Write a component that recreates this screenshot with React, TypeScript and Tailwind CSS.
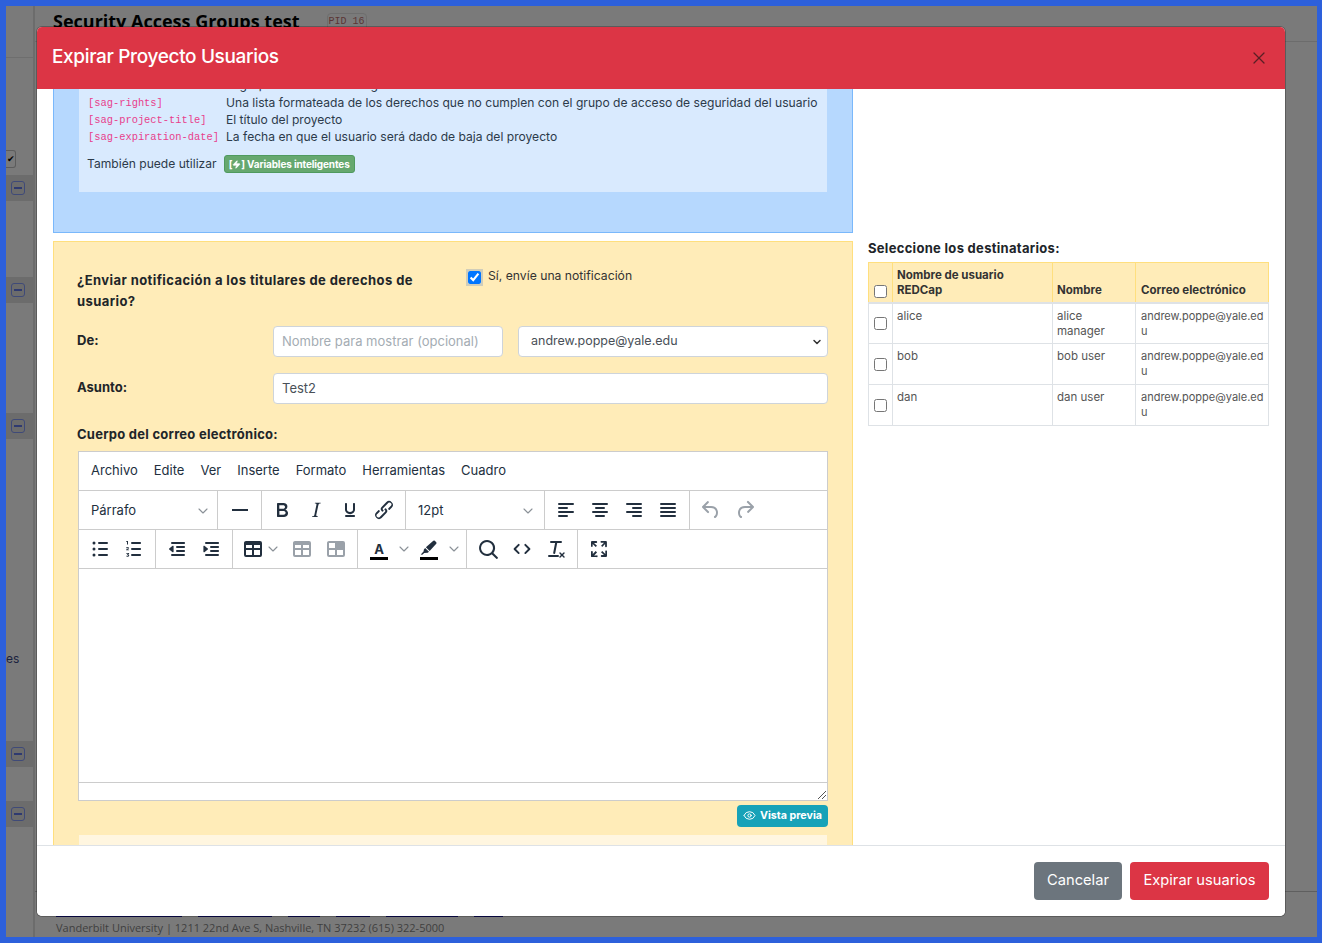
import { X, Eye, ChevronDown, Zap } from "lucide-react";

const FONT = "[font-family:Inter,'Noto_Sans',sans-serif]";

function Mce({ d, muted }: { d: string; muted?: boolean }) {
  return (
    <svg viewBox="0 0 24 24" className={muted ? "h-6 w-6 fill-[#9aa1a9]" : "h-6 w-6 fill-[#222f3e]"}>
      <path d={d} />
    </svg>
  );
}

const Bold = "M7.8 19c-.3 0-.5 0-.6-.2l-.2-.5V5.7c0-.2 0-.4.2-.5l.6-.2h5c1.5 0 2.7.3 3.5 1 .7.6 1.1 1.4 1.1 2.5a3 3 0 0 1-.6 1.9c-.4.6-1 1-1.6 1.2.4.1.9.3 1.3.6s.8.7 1 1.2c.4.4.5 1 .5 1.6 0 1.3-.4 2.3-1.3 3-.8.7-2.1 1-3.8 1H7.8zm5-8.3c.6 0 1.2-.1 1.6-.5.4-.3.6-.7.6-1.3 0-1.1-.8-1.7-2.3-1.7H9.3v3.5h3.4zm.5 6c.7 0 1.3-.1 1.7-.4.4-.4.6-.9.6-1.5s-.2-1-.7-1.4c-.4-.3-1-.4-2-.4H9.4v3.8h4z";
const Italic = "M16.7 4.7l-.1.9h-.3c-.6 0-1 0-1.4.3-.3.3-.4.6-.5 1.1l-2.1 9.8v.6c0 .5.4.8 1.4.8h.2l-.2.8H8l.2-.8h.2c1.1 0 1.8-.5 2-1.5l2-9.8.1-.5c0-.6-.4-.8-1.4-.8h-.3l.2-.9h5.8z";
const Underline = "M16 5c.6 0 1 .4 1 1v5.5a4 4 0 0 1-.4 1.8l-1 1.4a5.3 5.3 0 0 1-5.5 1 5 5 0 0 1-1.6-1c-.5-.4-.8-.9-1.1-1.4a4 4 0 0 1-.4-1.8V6c0-.6.4-1 1-1s1 .4 1 1v5.5c0 .3 0 .6.2 1l.6.7a3.3 3.3 0 0 0 2.2.8 3.4 3.4 0 0 0 2.2-.8c.3-.2.4-.5.6-.8l.2-.9V6c0-.6.4-1 1-1zM8 17h8c.6 0 1 .4 1 1s-.4 1-1 1H8a1 1 0 0 1 0-2z";
const LinkIcon = "M6.2 12.3a1 1 0 0 1 1.4 1.4l-2 2a2 2 0 1 0 2.6 2.8l4.8-4.8a1 1 0 0 0 0-1.4 1 1 0 1 1 1.4-1.3 2.9 2.9 0 0 1 0 4L9.6 20a3.9 3.9 0 0 1-5.5-5.5l2-2zm11.6-.6a1 1 0 0 1-1.4-1.4l2-2a2 2 0 1 0-2.6-2.8L11 10.3a1 1 0 0 0 0 1.4A1 1 0 1 1 9.6 13a2.9 2.9 0 0 1 0-4L14.4 4a3.9 3.9 0 0 1 5.5 5.5l-2 2z";
const Hr = "M4 11h16v2H4z";
const AlignLeft = "M5 5h14a1 1 0 0 1 0 2H5a1 1 0 1 1 0-2zm0 4h8a1 1 0 0 1 0 2H5a1 1 0 1 1 0-2zm0 8h8a1 1 0 0 1 0 2H5a1 1 0 0 1 0-2zm0-4h14a1 1 0 0 1 0 2H5a1 1 0 0 1 0-2z";
const AlignCenter = "M5 5h14a1 1 0 0 1 0 2H5a1 1 0 1 1 0-2zm3 4h8a1 1 0 0 1 0 2H8a1 1 0 1 1 0-2zm0 8h8a1 1 0 0 1 0 2H8a1 1 0 0 1 0-2zm-3-4h14a1 1 0 0 1 0 2H5a1 1 0 0 1 0-2z";
const AlignRight = "M5 5h14a1 1 0 0 1 0 2H5a1 1 0 1 1 0-2zm6 4h8a1 1 0 0 1 0 2h-8a1 1 0 0 1 0-2zm0 8h8a1 1 0 0 1 0 2h-8a1 1 0 0 1 0-2zm-6-4h14a1 1 0 0 1 0 2H5a1 1 0 0 1 0-2z";
const Justify = "M5 5h14a1 1 0 0 1 0 2H5a1 1 0 1 1 0-2zm0 4h14a1 1 0 0 1 0 2H5a1 1 0 1 1 0-2zm0 4h14a1 1 0 0 1 0 2H5a1 1 0 0 1 0-2zm0 4h14a1 1 0 0 1 0 2H5a1 1 0 0 1 0-2z";
const Undo = "M6.4 8H12c3.7 0 6.2 2 6.8 5.1.6 2.7-.4 5.6-2.3 6.8a1 1 0 0 1-1-1.8c1.1-.6 1.8-2.7 1.4-4.6-.5-2.1-2.1-3.5-4.9-3.5H6.4l3.3 3.3a1 1 0 1 1-1.4 1.4l-5-5a1 1 0 0 1 0-1.4l5-5a1 1 0 0 1 1.4 1.4L6.4 8z";
const Redo = "M17.6 10H12c-2.8 0-4.4 1.4-4.9 3.5-.4 2 .3 4 1.4 4.6a1 1 0 1 1-1 1.8c-2-1.2-2.9-4.1-2.3-6.8.6-3 3-5.1 6.8-5.1h5.6l-3.3-3.3a1 1 0 1 1 1.4-1.4l5 5a1 1 0 0 1 0 1.4l-5 5a1 1 0 0 1-1.4-1.4l3.3-3.3z";
const Bullets = "M11 5h8a1 1 0 0 1 0 2h-8a1 1 0 0 1 0-2zm0 6h8a1 1 0 0 1 0 2h-8a1 1 0 0 1 0-2zm0 6h8a1 1 0 0 1 0 2h-8a1 1 0 0 1 0-2zM4.5 6a1.5 1.5 0 1 1 3 0 1.5 1.5 0 0 1-3 0zm0 6a1.5 1.5 0 1 1 3 0 1.5 1.5 0 0 1-3 0zm0 6a1.5 1.5 0 1 1 3 0 1.5 1.5 0 0 1-3 0z";
const Numbers = "M10 17h8c.6 0 1 .4 1 1s-.4 1-1 1h-8a1 1 0 0 1 0-2zm0-6h8c.6 0 1 .4 1 1s-.4 1-1 1h-8a1 1 0 0 1 0-2zm0-6h8c.6 0 1 .4 1 1s-.4 1-1 1h-8a1 1 0 1 1 0-2zM6 4v3.5H5V5h-.7V4H6zM4.2 10.5c0-.3.3-.5.9-.5h.7c.7 0 1.1.3 1.1.9 0 .4-.2.7-.7 1l-.8.6h1.5v.8H4.2v-.7l1.6-1.2c.2-.1.3-.3.3-.4 0-.2-.1-.2-.4-.2-.3 0-.5.1-.5.4h-1zM4.3 16h2.8v.7l-1 .8c.7.1 1.1.5 1.1 1.1 0 .8-.6 1.2-1.5 1.2s-1.5-.4-1.5-1.1h1c0 .2.2.3.5.3s.5-.1.5-.4-.2-.4-.6-.4h-.5v-.6l.9-.8H4.3V16z";
const Outdent = "M7 5h12c.6 0 1 .4 1 1s-.4 1-1 1H7a1 1 0 1 1 0-2zm5 4h7c.6 0 1 .4 1 1s-.4 1-1 1h-7a1 1 0 0 1 0-2zm0 4h7c.6 0 1 .4 1 1s-.4 1-1 1h-7a1 1 0 0 1 0-2zm-5 4h12a1 1 0 0 1 0 2H7a1 1 0 0 1 0-2zm1.6-2.2a.6.6 0 0 1-1 .4L4.2 12.4a.6.6 0 0 1 0-.8l3.4-2.8a.6.6 0 0 1 1 .4v5.6z";
const Indent = "M7 5h12c.6 0 1 .4 1 1s-.4 1-1 1H7a1 1 0 1 1 0-2zm5 4h7c.6 0 1 .4 1 1s-.4 1-1 1h-7a1 1 0 0 1 0-2zm0 4h7c.6 0 1 .4 1 1s-.4 1-1 1h-7a1 1 0 0 1 0-2zm-5 4h12a1 1 0 0 1 0 2H7a1 1 0 0 1 0-2zm-2.6-2.8V9.2a.6.6 0 0 1 1-.4l3.4 2.8c.3.2.3.6 0 .8l-3.4 2.8a.6.6 0 0 1-1-.4z";
const TableCells = "M19 4a2 2 0 0 1 2 2v12a2 2 0 0 1-2 2H5a2 2 0 0 1-2-2V6c0-1.1.9-2 2-2h14zM5 13v5h6v-5H5zm14 0h-6v5h6v-5zm0-2V8h-6v3h6zM11 8H5v3h6V8z";
const TableHead = "M19 4a2 2 0 0 1 2 2v12a2 2 0 0 1-2 2H5a2 2 0 0 1-2-2V6c0-1.1.9-2 2-2h14zM5 13v5h6v-5H5zm14 0h-6v5h6v-5zM11 6H5v5h6V6z";
const Highlight = "M17.75 2.4a1.4 1.4 0 0 1 2 0l1.9 1.9a1.4 1.4 0 0 1 0 2l-8.8 9.6-5-5 9.9-8.5zM6.8 12l5.2 5-1.7 1.4-4.6.2L3 21l-2-.5 3.7-3.7L5.2 14l1.6-2z";
const Search = "M16 17.3a8 8 0 1 1 1.4-1.4l4.3 4.4a1 1 0 0 1-1.4 1.4l-4.4-4.3zm-5-.3a6 6 0 1 0 0-12 6 6 0 0 0 0 12z";
const Code = "M9.4 7.2a1 1 0 0 1 0 1.4L6 12l3.4 3.4a1 1 0 0 1-1.4 1.4l-4.1-4.1a1 1 0 0 1 0-1.4L8 7.2a1 1 0 0 1 1.4 0zm5.2 0a1 1 0 0 1 1.4 0l4.1 4.1a1 1 0 0 1 0 1.4L16 16.8a1 1 0 0 1-1.4-1.4L18 12l-3.4-3.4a1 1 0 0 1 0-1.4z";
const RemoveFormat = "M13.2 6l-2 10.2a1 1 0 0 1-2-.4L11.1 6H7a1 1 0 1 1 0-2h10a1 1 0 0 1 0 2h-3.8zM5 18h9a1 1 0 0 1 0 2H5a1 1 0 0 1 0-2zm11.5-2.6l1.5 1.5 1.5-1.5a.7.7 0 0 1 1 1L19 17.9l1.5 1.5a.7.7 0 0 1-1 1L18 18.9l-1.5 1.5a.7.7 0 0 1-1-1l1.5-1.5-1.5-1.5a.7.7 0 0 1 1-1z";
const Fullscreen = "M15.3 10l-1.2-1.3 2.9-3h-2.3a.9.9 0 1 1 0-1.7H19c.5 0 .9.4.9.9v4.4a.9.9 0 1 1-1.8 0V7l-2.9 3zm0 4l3 3v-2.3a.9.9 0 1 1 1.7 0V19c0 .5-.4.9-.9.9h-4.4a.9.9 0 1 1 0-1.8H17l-3-2.9 1.3-1.2zM10 15.4l-2.9 3h2.3a.9.9 0 1 1 0 1.7H5a.9.9 0 0 1-1-.9v-4.4a.9.9 0 1 1 1.8 0V17l2.9-3 1.2 1.3zM8.7 10L5.7 7v2.3a.9.9 0 0 1-1.7 0V5c0-.5.4-.9.9-.9h4.4a.9.9 0 0 1 0 1.8H7l3 2.9-1.3 1.2z";

function Chev({ className = "" }: { className?: string }) {
  return <ChevronDown size={16} strokeWidth={1.7} className={`shrink-0 text-[#8b9198] ${className}`} />;
}

function Toggle() {
  return (
    <div className="flex h-[26px] w-[27px] items-center bg-[#6c6c6c] pl-[5px]">
      <div className="flex h-[14px] w-[14px] items-center justify-center rounded-[3px] border border-[#3f4a78]">
        <div className="h-[2px] w-[8px] bg-[#2f3a70]" />
      </div>
    </div>
  );
}

function SmartBadge() {
  return (
    <span className="inline-flex h-[18px] w-[131px] items-center justify-center rounded-[3px] border border-[#4f9a5f] bg-[#66a86f] text-[10px] font-bold tracking-[-0.15px] text-white">
      [<Zap size={9} className="fill-white" />]&nbsp;Variables inteligentes
    </span>
  );
}

const TAGS = [
  ["[sag-user-sag]", "El grupo de acceso de seguridad del usuario"],
  ["[sag-rights]", "Una lista formateada de los derechos que no cumplen con el grupo de acceso de seguridad del usuario"],
  ["[sag-project-title]", "El título del proyecto"],
  ["[sag-expiration-date]", "La fecha en que el usuario será dado de baja del proyecto"],
];

const RECIPIENTS = [
  ["alice", "alice manager"],
  ["bob", "bob user"],
  ["dan", "dan user"],
];

const FOOT_LINKS = ["w-[126px]", "w-[74px]", "w-[32px]", "w-[34px]", "w-[72px]", "w-[29px]"];

export default function App() {
  return (
    <div className={`relative h-[943px] w-[1322px] overflow-hidden border-y-[6px] border-r-[5px] border-l-[6px] border-[#2d60db] bg-[#7a7a7a] text-[#212529] ${FONT}`}>
      {/* page behind the dialog */}
      <div className="flex h-full">
        <aside className="w-[27px] shrink-0 text-[12px] text-[#1c2340]">
          <div className="mt-[51px] h-px bg-[#6e6e6e]" />
          <div className="mt-[92px] flex h-[18px] w-[10px] items-center justify-center rounded-r-[3px] border border-l-0 border-[#5c5c5c] text-[9px] text-black">✔</div>
          <div className="mt-[7px]"><Toggle /></div>
          <div className="mt-[76px]"><Toggle /></div>
          <div className="mt-[110px]"><Toggle /></div>
          <div className="mt-[212px] h-[15px] leading-[15px]">es</div>
          <div className="mt-[75px]"><Toggle /></div>
          <div className="mt-[34px]"><Toggle /></div>
        </aside>
        <main className="flex flex-1 flex-col border-l-2 border-[#6c6c6c]">
          <div className="flex h-[36px] items-start gap-[27px] border-b border-[#6c6c6c] pl-[18px] pt-[3px]">
            <h1 className="text-[18px] font-bold leading-[24px] text-black [font-family:'Open_Sans',sans-serif]">Security Access Groups test</h1>
            <span className="mt-[4px] w-[40px] rounded-[4px] border border-[#6e6e6e] text-center text-[10px] leading-[16px] text-[#5a3535] [font-family:'Liberation_Mono',monospace]">PID 16</span>
          </div>
          <div className="flex-1" />
          <div className="h-[46px] border-t border-[#5f5f5f] pl-[21px] text-[11px] leading-[14px] text-[#3f3f3f] [font-family:'Open_Sans',sans-serif]">
            <div className="mt-[24px] flex h-px gap-[16px]">
              {FOOT_LINKS.map((w) => (
                <span key={w} className={`${w} h-px bg-[#0a0a50]`} />
              ))}
            </div>
            <div className="mt-[4px]">Vanderbilt University | 1211 22nd Ave S, Nashville, TN 37232 (615) 322-5000</div>
          </div>
        </main>
      </div>

      {/* dialog */}
      <div className="absolute left-[31px] top-[21px] flex h-[889px] w-[1248px] flex-col overflow-hidden rounded-[5px] bg-white shadow-[0_0_0_1px_rgba(0,0,0,0.25)]">
        <div className="relative z-10 flex h-[62px] shrink-0 items-center justify-between bg-[#dc3545] pb-[2px] pl-[15px] pr-[16px]">
          <h2 className="text-[19px] font-medium tracking-[-0.35px] text-white">Expirar Proyecto Usuarios</h2>
          <X size={20} strokeWidth={1.5} className="mt-[2px] text-[#5a1f25]" />
        </div>

        <div className="flex min-h-0 flex-1 overflow-hidden bg-white pl-[16px] pr-[16px]">
          <div className="w-[800px] shrink-0">
            <div className="-mt-[30px] h-[174px] border border-[#7ab8fb] bg-[#b6d8fe] px-[25px]">
              <div className="h-[132px] bg-[#d9eafe] pl-[8px] pt-[16px]">
                {TAGS.map(([tag, text], i) => (
                  <div key={tag} className={i === 0 ? "flex h-[19px] items-start text-[12.1px] text-[#2c3a4a]" : "flex h-[17px] items-center text-[12.1px] text-[#2c3a4a]"}>
                    <code className="ml-px w-[138px] shrink-0 text-[10.4px] text-[#e83e8c] [font-family:'Liberation_Mono',monospace]">{tag}</code>
                    <span className="whitespace-nowrap">{text}</span>
                  </div>
                ))}
                <div className="mt-[9px] flex items-center gap-[7px] text-[12.1px] text-[#2c3a4a]">
                  También puede utilizar <SmartBadge />
                </div>
              </div>
            </div>

            <div className="mt-[8px] h-[700px] border border-[#ffdf7e] bg-[#ffecb8] px-[24px] pt-[28px]">
              <div className="flex">
                <div className="-ml-px w-[391px] pr-[30px] text-[13px] font-bold leading-[21px] tracking-[0.42px] text-[#212529]">
                  ¿Enviar notificación a los titulares de derechos de usuario?
                </div>
                <label className="-mt-[3px] flex h-[16px] items-start gap-[7px] text-[12.2px] text-[#333]">
                  <input type="checkbox" defaultChecked className="mt-[4px] h-[13px] w-[13px] accent-[#0075ff] shadow-[0_0_0_2px_rgba(120,150,190,0.35)]" />
                  Sí, envíe una notificación
                </label>
              </div>

              <div className="mt-[14px] flex items-center">
                <div className="-ml-px -mt-[2px] w-[196px] text-[13px] font-bold">De:</div>
                <div className="flex h-[31px] w-[230px] items-center rounded-[4px] border border-[#ced4da] bg-white px-[8px] text-[13px] text-[#a4acb3]">Nombre para mostrar (opcional)</div>
                <div className="ml-[15px] flex h-[31px] w-[310px] items-center justify-between rounded-[4px] border border-[#ced4da] bg-white pl-[12px] pr-[4px] text-[12.5px] text-[#495057]">
                  andrew.poppe@yale.edu
                  <ChevronDown size={12} strokeWidth={3} className="text-[#333]" />
                </div>
              </div>

              <div className="mt-[16px] flex items-center">
                <div className="-ml-px -mt-[2px] w-[196px] text-[13px] font-bold">Asunto:</div>
                <div className="flex h-[31px] w-[555px] items-center rounded-[4px] border border-[#ced4da] bg-white px-[8px] text-[13px] text-[#495057]">Test2</div>
              </div>

              <div className="-ml-px mt-[20px] text-[13px] font-bold leading-[20px] tracking-[0.25px]">Cuerpo del correo electrónico:</div>

              <div className="mt-[7px] h-[350px] w-[750px] border border-[#ccc] bg-white text-[#222f3e]">
                <div className="flex h-[39px] items-center gap-[16px] border-b border-[#ccc] pl-[12px] text-[13px]">
                  {["Archivo", "Edite", "Ver", "Inserte", "Formato", "Herramientas", "Cuadro"].map((m) => (
                    <span key={m}>{m}</span>
                  ))}
                </div>

                <div className="flex h-[39px] items-center border-b border-[#ccc]">
                  <div className="flex h-full w-[139px] items-center justify-between border-r border-[#ccc] pl-[12px] pr-[6px] pt-px text-[13px]">Párrafo <Chev /></div>
                  <div className="flex h-full w-[44px] items-center justify-center border-r border-[#ccc]"><Mce d={Hr} /></div>
                  <div className="flex h-full w-[144px] items-center gap-[10px] border-r border-[#ccc] pl-[8px]">
                    <Mce d={Bold} /><Mce d={Italic} /><Mce d={Underline} /><Mce d={LinkIcon} />
                  </div>
                  <div className="flex h-full w-[139px] items-center justify-between border-r border-[#ccc] pl-[12px] pr-[8px] pt-px text-[13px]">12pt <Chev /></div>
                  <div className="flex h-full w-[145px] items-center gap-[10px] border-r border-[#ccc] pl-[9px]">
                    <Mce d={AlignLeft} /><Mce d={AlignCenter} /><Mce d={AlignRight} /><Mce d={Justify} />
                  </div>
                  <div className="flex items-center gap-[10px] pl-[9px]"><Mce d={Undo} muted /><Mce d={Redo} muted /></div>
                </div>

                <div className="flex h-[39px] items-center border-b border-[#ccc]">
                  <div className="flex h-full w-[77px] items-center gap-[10px] border-r border-[#ccc] pl-[9px]"><Mce d={Bullets} /><Mce d={Numbers} /></div>
                  <div className="flex h-full w-[77px] items-center gap-[10px] border-r border-[#ccc] pl-[9px]"><Mce d={Outdent} /><Mce d={Indent} /></div>
                  <div className="flex h-full w-[125px] items-center border-r border-[#ccc] pl-[8px]">
                    <Mce d={TableCells} /><Chev className="mr-[9px]" /><Mce d={TableCells} muted />
                    <div className="ml-[10px]"><Mce d={TableHead} muted /></div>
                  </div>
                  <div className="flex h-full w-[109px] items-center border-r border-[#ccc] pl-[9px]">
                    <div className="flex h-6 w-6 shrink-0 flex-col items-center justify-end pb-[1px]">
                      <span className="text-[13px] font-bold leading-[15px]">A</span>
                      <div className="h-[3px] w-[18px] bg-black" />
                    </div>
                    <Chev className="ml-[5px] mr-[5px]" />
                    <div className="flex h-6 w-6 shrink-0 flex-col items-center justify-end pb-[1px]">
                      <svg viewBox="0 0 24 24" className="h-[18px] w-[18px] fill-[#222f3e]"><path d={Highlight} /></svg>
                      <div className="h-[3px] w-[18px] bg-black" />
                    </div>
                    <Chev className="ml-[5px]" />
                  </div>
                  <div className="flex h-full w-[111px] items-center gap-[10px] border-r border-[#ccc] pl-[9px]">
                    <Mce d={Search} /><Mce d={Code} /><Mce d={RemoveFormat} />
                  </div>
                  <div className="pl-[9px]"><Mce d={Fullscreen} /></div>
                </div>

                <div className="h-[213px]" />
                <div className="relative h-[18px] border-t border-[#ccc]">
                  <svg viewBox="0 0 10 10" className="absolute bottom-0 right-0 h-[10px] w-[10px] stroke-[#555]"><path d="M1 9l8-8M5 9l4-4" fill="none" /></svg>
                </div>
              </div>

              <div className="mt-[4px] flex justify-end">
                <span className="flex h-[22px] w-[91px] items-center justify-center gap-[4px] rounded-[4px] bg-[#17a2b8] text-[10.7px] font-bold text-white">
                  <Eye size={13} strokeWidth={1.8} className="-mt-[2px]" /> Vista previa
                </span>
              </div>
              <div className="ml-[1px] mt-[8px] h-[40px] w-[748px] bg-[#fff6e0]" />
            </div>
          </div>

          <div className="ml-[15px] w-[400px] shrink-0 pt-[151px]">
            <div className="text-[13px] font-bold leading-[16px] tracking-[0.3px] text-[#212529]">Seleccione los destinatarios:</div>
            <table className="mt-[6px] w-[400px] table-fixed border-collapse text-[11.5px] leading-[15px] text-[#555]">
              <colgroup>
                <col className="w-[24px]" />
                <col className="w-[160px]" />
                <col className="w-[83px]" />
                <col className="w-[133px]" />
              </colgroup>
              <thead>
                <tr className="h-[40px] bg-[#ffecb8] font-bold text-[#333]">
                  <th className="border border-[#ffdf7e] border-b-[2px] border-b-[#dee2e6] p-0 align-bottom"><input type="checkbox" className="mb-[4px] h-[13px] w-[13px]" /></th>
                  <th className="border border-[#ffdf7e] border-b-[2px] border-b-[#dee2e6] pb-[4px] pl-[4px] pr-[5px] text-left align-bottom">Nombre de usuario REDCap</th>
                  <th className="border border-[#ffdf7e] border-b-[2px] border-b-[#dee2e6] pb-[4px] pl-[4px] pr-[5px] text-left align-bottom">Nombre</th>
                  <th className="border border-[#ffdf7e] border-b-[2px] border-b-[#dee2e6] pb-[4px] pl-[5px] pr-[3px] text-left align-bottom">Correo electrónico</th>
                </tr>
              </thead>
              <tbody>
                {RECIPIENTS.map(([user, name]) => (
                  <tr key={user} className="h-[41px]">
                    <td className="border border-[#dee2e6] p-0 pt-[4px] text-center align-middle"><input type="checkbox" className="h-[13px] w-[13px]" /></td>
                    <td className="border border-[#dee2e6] pl-[4px] pr-[5px] pt-[5px] align-top">{user}</td>
                    <td className="border border-[#dee2e6] pl-[4px] pr-[5px] pt-[5px] align-top">{name}</td>
                    <td className="break-all border border-[#dee2e6] pl-[5px] pr-[2px] pt-[5px] align-top text-[11px]">andrew.poppe@yale.edu</td>
                  </tr>
                ))}
              </tbody>
            </table>
          </div>
        </div>

        <div className="flex h-[71px] shrink-0 items-center justify-end gap-[8px] border-t border-[#dee2e6] bg-white pr-[16px]">
          <button className="h-[38px] w-[88px] rounded-[4px] bg-[#6c757d] pb-px text-[14.7px] text-white">Cancelar</button>
          <button className="h-[38px] w-[139px] rounded-[4px] bg-[#dc3545] pb-px text-[14.7px] text-white">Expirar usuarios</button>
        </div>
      </div>
    </div>
  );
}
